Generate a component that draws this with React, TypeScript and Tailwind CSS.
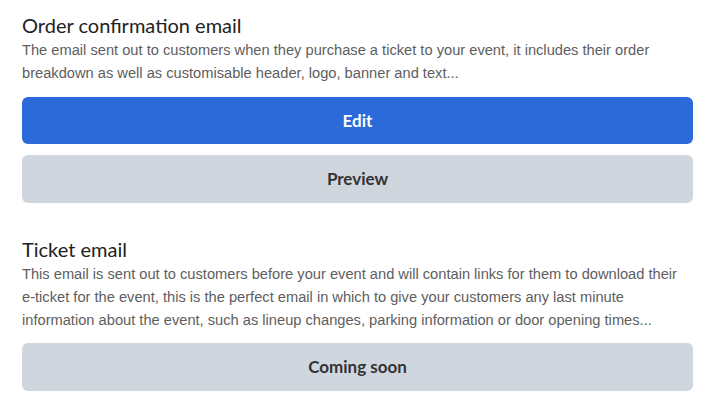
const lato = "font-['Lato',sans-serif]";
const body = "text-[14.67px] leading-[23px] text-[#5e5e5e] font-[family-name:'Liberation_Sans',Arial,sans-serif]";

export default function App() {
  return (
    <div className="bg-white min-h-screen px-[22px] pt-[11px]">
      {/* Order confirmation */}
      <section>
        <h2 className={`text-[20px] leading-[28px] text-[#222] ${lato}`}>Order confirmation email</h2>
        <p className={body}>
          The email sent out to customers when they purchase a ticket to your event, it includes their order
          breakdown as well as customisable header, logo, banner and text...
        </p>
        <div className="mt-[12px] flex flex-col gap-[11px]">
          <button className={`h-[47px] w-full rounded-[6px] bg-[#2b6ad8] text-white text-[17px] font-bold ${lato}`}>
            Edit
          </button>
          <button className={`h-[48px] w-full rounded-[6px] bg-[#cfd6dd] text-[#333] text-[17px] font-bold ${lato}`}>
            Preview
          </button>
        </div>
      </section>

      {/* Ticket email */}
      <section className="mt-[32px]">
        <h2 className={`text-[20px] leading-[28px] text-[#222] ${lato}`}>Ticket email</h2>
        <p className={body}>
          This email is sent out to customers before your event and will contain links for them to download their
          e-ticket for the event, this is the perfect email in which to give your customers any last minute
          information about the event, such as lineup changes, parking information or door opening times...
        </p>
        <div className="mt-[11px]">
          <button className={`h-[48px] w-full rounded-[6px] bg-[#cfd6dd] text-[#333] text-[17px] font-bold ${lato}`}>
            Coming soon
          </button>
        </div>
      </section>
    </div>
  );
}
